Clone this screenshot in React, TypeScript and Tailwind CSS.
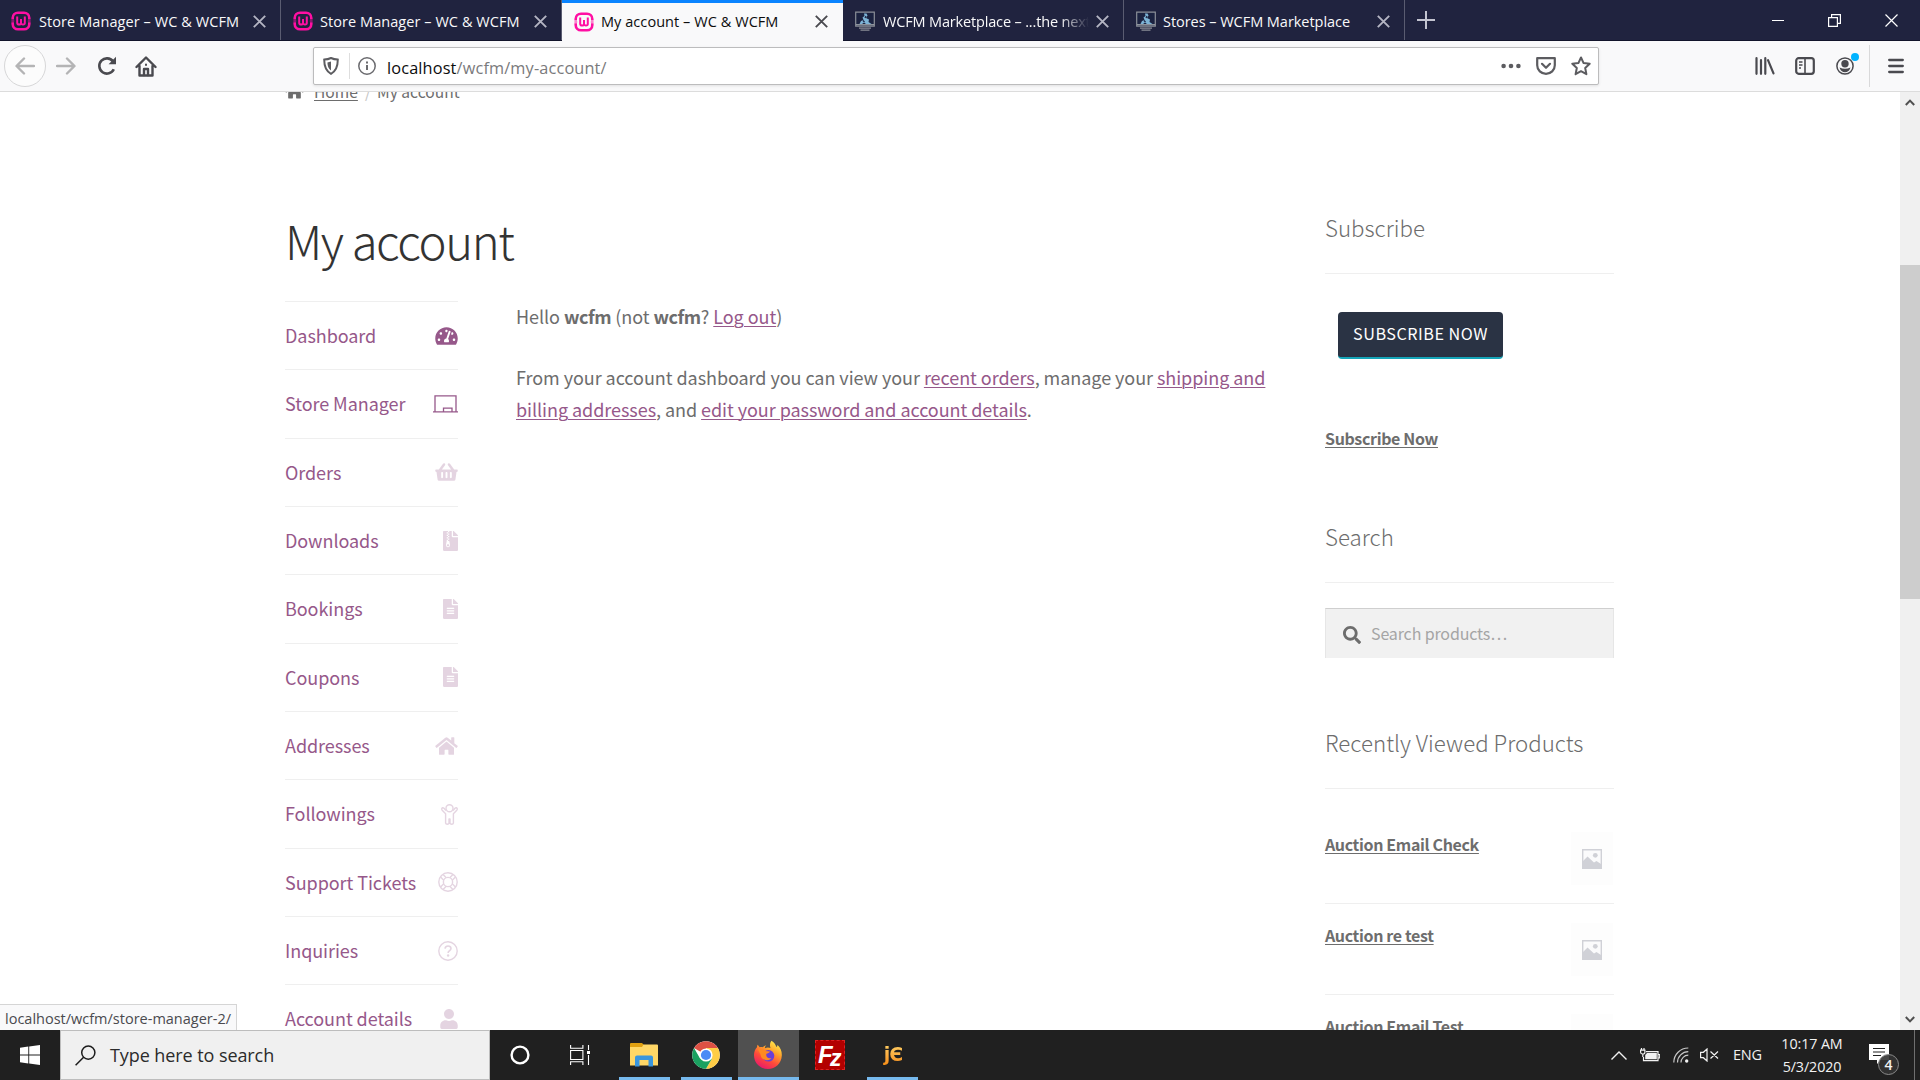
import type { ReactNode } from "react";
import {
  FaFileAlt,
  FaFileArchive,
  FaHome,
  FaSearch,
  FaShoppingBasket,
  FaTachometerAlt,
  FaUser,
} from "react-icons/fa";

/* ------------------------------ browser icons ----------------------------- */

const WooIcon = () => (
  <svg width="20" height="20" viewBox="0 0 20 20" fill="none" stroke="#ff0fa3" className="shrink-0">
    <path d="M1.700 8.600V7a5.300 5.300 0 0 1 5.300-5.300h6a5.300 5.300 0 0 1 5.300 5.300v1.600M1.700 11.200V13a5.300 5.300 0 0 0 5.300 5.300h6a5.300 5.300 0 0 0 5.300-5.300v-1.800" strokeWidth="2.600" />
    <path d="M6.200 5.600v6.200q0 1.800 1.800 1.800t2-1.800V8v3.800q.1 1.800 2 1.800t1.800-1.800V5.600" strokeWidth="2" />
    <path d="M.4 10h2.800M16.800 10h2.800" strokeWidth="1" />
  </svg>
);

const MonitorIcon = () => (
  <svg width="20" height="20" viewBox="0 0 20 20" fill="none" className="shrink-0">
    <path d="M.7 1.200h18.600v14H.7z" fill="#1b2240" stroke="#8b8f98" strokeWidth="1.200" />
    <path d="M9 2.500h2.500l1 2-1.500 2.500 3 1.500-.5 2.500 3 2H11l-2-1.500-2 1.500H4.500l1.500-3 2.500-1-1-2.500 2-1.500z" fill="#7db4d6" />
    <path d="M8 9.500l1.500 1.500M11 5l-1 2" stroke="#1b2240" strokeWidth="1.200" />
    <path d="M1 13.700h18" stroke="#9aa0a8" strokeWidth="1.200" />
    <path d="M4 17.200h12M5.500 19.200h9" stroke="#8b8f98" strokeWidth="1.200" />
  </svg>
);

const CloseIcon = ({ className }: { className: string }) => (
  <svg width="13" height="13" viewBox="0 0 13 13" fill="none" stroke="currentColor" strokeWidth="1.9" className={className}>
    <path d="M.8.8l11.400 11.400M12.200.8L.8 12.200" />
  </svg>
);

/* ---------------------------------- tabs ---------------------------------- */

const TABS = [
  { title: "Store Manager – WC & WCFM", icon: <WooIcon />, box: "w-[281px] pl-[11px]", text: "tracking-[0.080px]" },
  { title: "Store Manager – WC & WCFM", icon: <WooIcon />, box: "w-[281px] pl-[12px]", text: "tracking-[0.060px] -ml-px" },
  { title: "My account – WC & WCFM", icon: <WooIcon />, box: "w-[281px] pl-[12px]", text: "tracking-[0.060px] -ml-px", active: true },
  { title: "WCFM Marketplace – ...the next", icon: <MonitorIcon />, box: "w-[281px] pl-[12px]", text: "tracking-[-0.160px]", fade: true },
  { title: "Stores – WCFM Marketplace", icon: <MonitorIcon />, box: "w-[281px] pl-[12px]", text: "tracking-[-0.040px] -ml-px" },
];

const TabStrip = () => (
  <div className="flex h-[41px] shrink-0 border-b border-[#12142b] bg-[#20233f]">
    {TABS.map((tab, i) => (
      <div
        key={i}
        className={
          tab.active
            ? `relative z-10 flex h-[41px] shrink-0 items-center border-t-[3px] border-[#0a84ff] bg-[#f9f9fa] pb-px pr-[15px] text-[#0c0c0d] ${tab.box}`
            : `flex h-10 shrink-0 items-center border-r border-[#5a5c71] pr-[14px] pt-[2px] text-[#f9f9fa] ${tab.box}`
        }
      >
        {tab.icon}
        <span className="ml-[8px] w-[206px] shrink-0">
          <span
            className={`block overflow-hidden whitespace-nowrap pt-px text-[14.500px] leading-5 ${tab.text} ${
              tab.fade ? "[mask-image:linear-gradient(to_right,black_86%,transparent)]" : ""
            }`}
          >
            {tab.title}
          </span>
        </span>
        <CloseIcon className={tab.active ? "ml-auto text-[#4a4a4f]" : "ml-auto text-[#b4b5c3]"} />
      </div>
    ))}
    <svg width="18" height="18" viewBox="0 0 18 18" stroke="#c3c4d0" strokeWidth="2" className="ml-[12px] mt-[11px]">
      <path d="M9 0v18M0 9h18" />
    </svg>
    <div className="ml-auto flex h-10 items-center gap-[44px] pr-[22px] text-white">
      <svg width="12" height="13" viewBox="0 0 12 13" stroke="currentColor">
        <path d="M0 6.500h12" />
      </svg>
      <svg width="13" height="13" viewBox="0 0 13 13" fill="none" stroke="currentColor" strokeWidth="1.200">
        <path d="M.6 3.600h8.800v8.800H.6zM3.600 3.400V.6h8.800v8.800H9.600" />
      </svg>
      <svg width="13" height="13" viewBox="0 0 13 13" stroke="currentColor" strokeWidth="1.200">
        <path d="M.5.5l12 12M12.500.5l-12 12" />
      </svg>
    </div>
  </div>
);

/* --------------------------------- toolbar -------------------------------- */

const Toolbar = () => (
  <div className="flex h-[51px] shrink-0 items-center border-b border-[#dcdcdc] bg-[#f9f9fa]">
    <span className="ml-[4px] flex size-[42px] shrink-0 items-center justify-center rounded-full border border-[#d7d7d8] bg-[#fcfcfc] text-[#b4b4b5]">
      <svg width="20" height="18" viewBox="0 0 20 18" fill="none" stroke="currentColor" strokeWidth="2.400" strokeLinecap="round" strokeLinejoin="round">
        <path d="M9 1.500L1.500 9 9 16.500M2 9h17" />
      </svg>
    </span>
    <svg width="20" height="18" viewBox="0 0 20 18" fill="none" stroke="#b4b4b5" strokeWidth="2.400" strokeLinecap="round" strokeLinejoin="round" className="ml-[10px]">
      <path d="M11 1.500L18.500 9 11 16.500M18 9H1" />
    </svg>
    <svg width="20" height="20" viewBox="0 0 20 20" fill="none" stroke="#4a4a4f" strokeWidth="2.600" className="ml-[21px]">
      <path d="M16.800 13.200A7.600 7.600 0 1 1 16 5.400" />
      <path d="M19 .8v7.400h-7.400z" fill="#4a4a4f" stroke="none" />
    </svg>
    <svg width="22" height="21" viewBox="0 0 22 21" fill="none" stroke="#4a4a4f" strokeWidth="2.400" strokeLinejoin="round" strokeLinecap="round" className="ml-[18px]">
      <path d="M1.500 11L11 1.500 20.500 11M4.500 10v9.500h13V10" />
      <path d="M9 19v-6h4v6" />
      <path d="M11 8.500v.6" strokeWidth="2" />
    </svg>
    <div className="ml-[156px] flex h-[38px] w-[1286px] items-center rounded-[2px] border border-[#bcbcbd] bg-white shadow-[0_1px_3px_rgba(0,0,0,0.1)]">
      <svg width="16" height="18" viewBox="0 0 16 18" fill="none" stroke="#5c5c60" strokeWidth="2" className="ml-[9px] shrink-0">
        <path d="M1.200 2.600Q5 2.400 8 1q3 1.400 6.800 1.600c0 7-1.300 11.500-6.800 14.200C2.500 14.100 1.200 9.600 1.200 2.600z" />
        <path d="M8 4.600v8.900C5.500 11.800 4.500 9 4.400 5.400Q6.300 5.200 8 4.600z" fill="#5c5c60" stroke="none" />
      </svg>
      <span className="ml-[10px] h-[26px] w-px bg-[#dedede]" />
      <svg width="18" height="18" viewBox="0 0 18 18" fill="none" stroke="#6b6b6f" strokeWidth="1.500" className="ml-[8px] shrink-0">
        <circle cx="9" cy="9" r="8.200" />
        <path d="M9 8v5M9 4.600v2" strokeWidth="2" />
      </svg>
      <span className="ml-[11px] whitespace-nowrap pt-[3px] text-[16.300px] leading-5 tracking-[0.150px] text-[#7a7a7c]">
        <span className="text-[#0c0c0d]">localhost</span>/wcfm/my-account/
      </span>
      <span className="ml-auto flex items-center pr-[7px] text-[#5c5c60]">
        <svg width="20" height="6" viewBox="0 0 20 6" fill="currentColor">
          <circle cx="2.600" cy="3" r="2.300" />
          <circle cx="10" cy="3" r="2.300" />
          <circle cx="17.400" cy="3" r="2.300" />
        </svg>
        <svg width="20" height="18" viewBox="0 0 20 18" fill="none" stroke="currentColor" strokeWidth="2.200" strokeLinejoin="round" strokeLinecap="round" className="ml-[15px]">
          <path d="M1.200 1.200h17.600v7c0 5-4 8.600-8.800 8.600s-8.800-3.600-8.800-8.600z" />
          <path d="M6 6.800l4 4 4-4" />
        </svg>
        <svg width="20" height="20" viewBox="0 0 20 20" fill="none" stroke="currentColor" strokeWidth="2" strokeLinejoin="round" className="ml-[15px]">
          <path d="M10 1.500l2.600 5.600 6.100.7-4.500 4.200 1.200 6.200L10 15.200l-5.400 3 1.200-6.200L1.300 7.800l6.100-.7z" />
        </svg>
      </span>
    </div>
    <div className="ml-auto flex items-center text-[#4a4a4f]">
      <svg width="20" height="18" viewBox="0 0 20 18" fill="none" stroke="currentColor" strokeWidth="2.200" strokeLinecap="round">
        <path d="M1.500 1.200v15.600M6 3.200v13.600M10.300 1.200v15.600M13 3.200l5.500 13.200" />
      </svg>
      <svg width="20" height="18" viewBox="0 0 20 18" fill="none" stroke="currentColor" strokeWidth="2.200" className="ml-[20px]">
        <rect x="1.200" y="1.200" width="17.600" height="15.600" rx="2.500" />
        <path d="M10 1v16" strokeWidth="1.600" />
        <path d="M4 5h3.500M4 8h3.500M4 11h2" strokeWidth="1.300" />
      </svg>
      <span className="relative ml-[21px]">
        <svg width="18" height="18" viewBox="0 0 18 18" fill="currentColor">
          <circle cx="9" cy="9" r="8.100" fill="none" stroke="currentColor" strokeWidth="1.500" />
          <circle cx="9" cy="6.700" r="3.700" />
          <path d="M3.500 10.500q5.500 2.400 11 0-1.500 4.800-5.500 4.800t-5.500-4.800z" />
        </svg>
        <span className="absolute -right-[5px] -top-[4px] size-[8px] rounded-full bg-[#00b3ff]" />
      </span>
      <span className="ml-[15px] h-[42px] w-px bg-[#d9d9da]" />
      <svg width="16" height="16" viewBox="0 0 16 16" stroke="currentColor" strokeWidth="2.300" strokeLinecap="round" className="ml-[18px] mr-[16px]">
        <path d="M1.200 2h13.600M1.200 8h13.600M1.200 14h13.600" />
      </svg>
    </div>
  </div>
);

/* ------------------------------ account page ------------------------------ */

const LaptopIcon = () => (
  <svg width="25" height="18" viewBox="0 0 25 18" fill="none" stroke="currentColor" strokeWidth="1.300">
    <path d="M2 16.500V.9h21v15.600M0 16.900h25M10.500 16.500v-3.300h8.500v3.300" />
  </svg>
);

const ChildIcon = () => (
  <svg width="17" height="21" viewBox="0 0 17 21" fill="none" stroke="currentColor" strokeWidth="1.400" strokeLinejoin="round">
    <circle cx="8.500" cy="4.200" r="3.500" />
    <path d="M5 6.600L3 4.200Q1.600 3.200.8 4.600q-.2.900.4 1.600l3.400 3.600v9.400q.2 1 1.700 1t1.700-1V15h1v4.200q.2 1 1.700 1t1.700-1V9.800l3.400-3.600q.6-.7.4-1.600-.8-1.400-2.200-.4l-2 2.400" />
  </svg>
);

const LifeRingIcon = () => (
  <svg width="20" height="20" viewBox="0 0 20 20" fill="none" stroke="currentColor" strokeWidth="1.400">
    <circle cx="10" cy="10" r="9.200" />
    <circle cx="10" cy="10" r="4.600" />
    <path d="M5.700 8.200L2.600 5.100M8.200 5.700L5.100 2.600M11.800 5.700l3.100-3.100M14.300 8.200l3.100-3.100M14.300 11.800l3.100 3.100M11.800 14.300l3.100 3.100M8.200 14.300l-3.100 3.100M5.700 11.800l-3.100 3.100" />
  </svg>
);

const QuestionIcon = () => (
  <svg width="20" height="20" viewBox="0 0 20 20" fill="none" stroke="currentColor" strokeWidth="1.400">
    <circle cx="10" cy="10" r="9.200" />
    <path d="M7 7.600q.5-2.600 3-2.600 2.900 0 3 2.500 0 1.300-1.500 2.200-1.400.8-1.400 2.300" strokeWidth="1.600" />
    <circle cx="10.100" cy="14.500" r="1.200" fill="currentColor" stroke="none" />
  </svg>
);

type NavItem = { label: string; icon: ReactNode; strong?: boolean };

const NAV: NavItem[] = [
  { label: "Dashboard", icon: <FaTachometerAlt className="h-[20px] w-[23px]" />, strong: true },
  { label: "Store Manager", icon: <LaptopIcon />, strong: true },
  { label: "Orders", icon: <FaShoppingBasket className="h-[20px] w-[23px]" /> },
  { label: "Downloads", icon: <FaFileArchive className="h-[20px] w-[15px]" /> },
  { label: "Bookings", icon: <FaFileAlt className="h-[20px] w-[15px]" /> },
  { label: "Coupons", icon: <FaFileAlt className="h-[20px] w-[15px]" /> },
  { label: "Addresses", icon: <FaHome className="h-[20px] w-[23px]" /> },
  { label: "Followings", icon: <ChildIcon /> },
  { label: "Support Tickets", icon: <LifeRingIcon /> },
  { label: "Inquiries", icon: <QuestionIcon /> },
  { label: "Account details", icon: <FaUser className="h-[20px] w-[18px]" /> },
];

const AccountNav = () => (
  <nav className="w-[173px] shrink-0 border-t border-[#efefef]">
    {NAV.map((item) => (
      <a
        key={item.label}
        className="flex h-[68.350px] items-center justify-between border-b border-[#efefef] text-[18px] leading-8 tracking-[-0.060px] text-[#96588a]"
      >
        <span className="whitespace-nowrap pb-[1.500px]">{item.label}</span>
        <span className={item.strong ? "" : "opacity-25"}>{item.icon}</span>
      </a>
    ))}
  </nav>
);

const Link = ({ children }: { children: ReactNode }) => (
  <a className="text-[#96588a] underline decoration-1 underline-offset-[2px]">{children}</a>
);

const WidgetTitle = ({ children }: { children: ReactNode }) => (
  <h2 className="h-[64px] whitespace-nowrap border-b border-[#efefef] text-[22.300px] font-light leading-[34px] text-[#6d6d6d]">
    {children}
  </h2>
);

const PlaceholderImage = () => (
  <span className="mr-px mt-[2px] flex h-[53px] w-[42px] items-center justify-center bg-[#fdfdfd]">
    <svg width="20" height="20" viewBox="0 0 20 20">
      <path d="M.7.7h18.600v18.600H.7z" fill="#fbfbfc" stroke="#d0d1d7" strokeWidth="1.400" />
      <circle cx="13.300" cy="6.300" r="2.400" fill="#d0d1d7" />
      <path d="M1 12l4.500-4.500 6.500 6 2.500-1.500 4.500 3v4H1z" fill="#d0d1d7" />
    </svg>
  </span>
);

const PRODUCTS = ["Auction Email Check", "Auction re test", "Auction Email Test"];

const Sidebar = () => (
  <aside className="w-[289px] shrink-0 pt-[118px] text-[#6d6d6d]">
    <div className="pb-px">
      <WidgetTitle>Subscribe</WidgetTitle>
    </div>
    <button className="ml-[13px] mt-[37px] block h-[47px] w-[165px] rounded-[4px] border-b-2 border-[#15a5b8] bg-[#2a3344] text-center text-[16.200px] leading-[43px] tracking-[0.5px] text-white">
      <span className="block h-[45px]">SUBSCRIBE NOW</span>
    </button>
    <p className="mt-[63px] h-[33px] text-[16px] font-semibold leading-8 tracking-[-0.350px]">
      <a className="underline decoration-1 underline-offset-[2px]">Subscribe Now</a>
    </p>
    <div className="mt-[64px]">
      <WidgetTitle>Search</WidgetTitle>
    </div>
    <label className="mt-[25px] flex h-[50px] items-center border border-b-0 border-[#e6e6e6] border-t-[#cfcfcf] bg-[#f1f1f1] pl-[17px]">
      <FaSearch className="mt-[2px] size-[18px]" />
      <span className="ml-[10px] pb-[2px] text-[16px] leading-8 tracking-[-0.140px] text-[#a5a5a5]">Search products…</span>
    </label>
    <div className="mt-[67px]">
      <WidgetTitle>Recently Viewed Products</WidgetTitle>
    </div>
    <ul className="pt-[24px]">
      {PRODUCTS.map((name) => (
        <li key={name} className="flex h-[91px] items-start justify-between border-b border-[#efefef] pt-[17px]">
          <a className="-mt-[2px] text-[16px] font-semibold leading-8 tracking-[-0.350px] underline decoration-1 underline-offset-[2px]">
            {name}
          </a>
          <PlaceholderImage />
        </li>
      ))}
    </ul>
  </aside>
);

const Page = () => (
  <div className="flex min-w-0 flex-1 overflow-hidden bg-white pl-[285px] font-['Noto_Sans_CJK_SC',sans-serif]">
    <div className="w-[1040px] shrink-0">
      <div className="-mt-[17px] flex h-8 items-center text-[15.600px] leading-8 text-[#6d6d6d]">
        <FaHome className="h-[18px] w-[19px]" />
        <a className="ml-[10px] underline decoration-1 underline-offset-[2px]">Home</a>
        <span className="ml-[7px] text-[#c5c5c5]">/</span>
        <span className="ml-[6px]">My account</span>
      </div>
      <h1 className="mt-[101px] h-[65px] whitespace-nowrap text-[47.300px] font-light leading-[64px] tracking-[-1.400px] text-[#333333]">
        My account
      </h1>
      <div className="mt-[28px] flex">
        <AccountNav />
        <div className="-mt-px ml-[58px] w-[770px] text-[18px] leading-[32px] tracking-[-0.050px] text-[#6d6d6d]">
          <p>
            Hello <strong className="font-semibold tracking-[-0.400px]">wcfm</strong> (not{" "}
            <strong className="font-semibold tracking-[-0.400px]">wcfm</strong>? <Link>Log out</Link>)
          </p>
          <p className="mt-[29px] whitespace-nowrap">
            From your account dashboard you can view your <Link>recent orders</Link>, manage your{" "}
            <Link>shipping and</Link>
            <br />
            <Link>billing addresses</Link>, and <Link>edit your password and account details</Link>.
          </p>
        </div>
      </div>
    </div>
    <Sidebar />
  </div>
);

const Scrollbar = () => (
  <div className="flex w-5 shrink-0 flex-col items-center bg-[#f0f0f0] pb-[7px] pt-[7px] text-[#505050]">
    <svg width="10" height="7" viewBox="0 0 10 7" fill="none" stroke="currentColor" strokeWidth="2">
      <path d="M.8 6L5 1.600 9.200 6" />
    </svg>
    <span className="mt-[159px] h-[334px] w-full bg-[#cdcdcd]" />
    <svg width="10" height="7" viewBox="0 0 10 7" fill="none" stroke="currentColor" strokeWidth="2" className="mt-auto">
      <path d="M.8 1L5 5.400 9.200 1" />
    </svg>
  </div>
);

/* --------------------------------- taskbar -------------------------------- */

const FolderIcon = () => (
  <svg width="28" height="24" viewBox="0 0 28 24">
    <path d="M0 1q0-1 1-1h11l2 2v6H0z" fill="#e0a010" />
    <path d="M0 4h12l1.500-2.500H27q1 0 1 1v20H0z" fill="#ffd766" />
    <path d="M5 23.500V14.500q0-2 2-2h14q2 0 2 2v9h-4.500v-6.500h-9v6.500z" fill="#3a96dd" />
  </svg>
);

const ChromeIcon = () => (
  <svg width="28" height="28" viewBox="0 0 28 28">
    <circle cx="14" cy="14" r="13.800" fill="#fff" />
    <path d="M14 14L2.050 7.100A13.800 13.800 0 0 1 25.950 7.100H14z" fill="#dd5144" />
    <path d="M25.950 7.100A13.800 13.800 0 0 1 14 27.800l6-10.350L14 7.100z" fill="#ffcd46" />
    <path d="M14 27.800A13.800 13.800 0 0 1 2.050 7.100l6 10.350L20 17.450z" fill="#1ba160" />
    <circle cx="14" cy="14" r="6.600" fill="#fff" />
    <circle cx="14" cy="14" r="5.100" fill="#4c8bf5" />
  </svg>
);

const FirefoxIcon = () => (
  <svg width="30" height="30" viewBox="0 0 30 30">
    <defs>
      <linearGradient id="fx" x1="0.800" y1="0" x2="0.250" y2="1">
        <stop offset="0" stopColor="#fff44f" />
        <stop offset="0.350" stopColor="#ffa02a" />
        <stop offset="0.650" stopColor="#ff4b3a" />
        <stop offset="1" stopColor="#e8156f" />
      </linearGradient>
    </defs>
    <path d="M18.500.8c3.200 2 4 4.200 5 6.200 1-.4.900-1.500.8-2.200 3.500 3 4.700 7 4.500 10.700C28.400 23.500 22.500 29 15 29 7 29 1.200 23 1 15.500.9 11.800 2.200 9 4 7.200c0-1 .2-1.800.7-2.400l2 2.400c1-.3 2-.3 3 0 1-1 2.200-1.700 3.500-2-1 1-1.300 2-1.300 3 2-1 4-.8 5.600-.2C16.600 5.600 16.800 2.800 18.500.8z" fill="url(#fx)" />
    <circle cx="15.500" cy="15.800" r="5.800" fill="#6b3fd6" />
    <path d="M5 9.500c3-1 6 0 7.500 1.500l4.500.5c-.8 1.700-2.300 1.900-3.600 2.200-.9 3.300 1.600 5.200 5 4.300-2.500 4-10.400 2.500-10.900-3.500z" fill="#ff8a20" />
  </svg>
);

const FileZillaIcon = () => (
  <span className="flex size-[30px] items-center justify-center border border-dashed border-[#d22] bg-[#b30000] pr-[3px] font-['Liberation_Sans',sans-serif] text-[24px] font-bold italic leading-none tracking-[-2.500px] text-white">
    F<span className="mt-[7px] text-[23px]">z</span>
  </span>
);

const JeIcon = () => (
  <span className="mb-[3px] bg-gradient-to-b from-[#ffd76a] to-[#f58a07] bg-clip-text pl-px font-['DejaVu_Sans',sans-serif] text-[19px] font-bold leading-6 tracking-[-1px] text-transparent">
    jЄ
  </span>
);

const APPS: { icon: ReactNode; box: string; open?: boolean }[] = [
  { icon: <FolderIcon />, box: "w-[51px] pr-[2px]", open: true },
  { icon: <ChromeIcon />, box: "ml-[11px] w-[51px] pr-[2px]", open: true },
  { icon: <FirefoxIcon />, box: "ml-[6px] w-[61px] bg-[#505050] pr-[2px]", open: true },
  { icon: <FileZillaIcon />, box: "w-[62px]" },
  { icon: <JeIcon />, box: "ml-[6px] w-[51px]", open: true },
];

const Taskbar = () => (
  <div className="flex h-[50px] shrink-0 bg-[#202020] text-[#f2f2f2]">
    <div className="flex w-[60px] items-center justify-center">
      <svg width="20" height="20" viewBox="0 0 20 20" fill="#fff">
        <path d="M0 2.700l8.300-1.100v7.900H0zM9.200 1.400L20 0v9.500H9.200zM0 10.400h8.300v8L0 17.300zM9.200 10.400H20V20L9.200 18.500z" />
      </svg>
    </div>
    <div className="flex w-[430px] items-center border border-[#bdbdbd] bg-[#f0f0f0] pl-[14px] text-[#2b2b2b]">
      <svg width="21" height="21" viewBox="0 0 21 21" fill="none" stroke="#1c1c1c" strokeWidth="1.500">
        <circle cx="13.300" cy="7.600" r="6.600" />
        <path d="M8.600 12.300L.6 20.200" />
      </svg>
      <span className="ml-[14px] text-[18px] leading-6 tracking-[-0.080px]">Type here to search</span>
    </div>
    <div className="flex w-[129px] items-center pl-[20px]">
      <svg width="20" height="20" viewBox="0 0 20 20" fill="none" stroke="#fff" strokeWidth="2.400">
        <circle cx="10" cy="10" r="8.400" />
      </svg>
      <svg width="21" height="20" viewBox="0 0 21 20" fill="none" stroke="#fff" strokeWidth="1.100" className="ml-[40px]">
        <path d="M.6 5.500h12.300v9H.6zM.6 0v3.300h12.300V0M.6 20v-3.300h12.300V20M18.500 0v5M18.500 10v10" />
        <path d="M17 6h3v3h-3z" fill="#fff" stroke="none" />
      </svg>
    </div>
    {APPS.map((app, i) => (
      <div key={i} className={`relative flex items-center justify-center ${app.box}`}>
        {app.icon}
        {app.open ? <span className="absolute inset-x-0 bottom-0 h-[3px] bg-[#76b9ed]" /> : null}
      </div>
    ))}
    <div className="ml-auto flex items-center">
      <svg width="16" height="9" viewBox="0 0 16 9" fill="none" stroke="currentColor" strokeWidth="1.400">
        <path d="M.5 8.500L8 1l7.500 7.500" />
      </svg>
      <svg width="20" height="14" viewBox="0 0 20 14" fill="none" stroke="currentColor" strokeWidth="1.200" className="ml-[13px]">
        <path d="M6 3.600h12v9H3.500V9M18.500 6.500h1.200v3.500h-1.200" />
        <path d="M7 5h9.800v6.200H5.200V7z" fill="currentColor" stroke="none" />
        <path d="M1.500 0v2M4 0v2M.6 2.200h4.300v2q0 1.800-2.100 1.800T.6 4.200zM2.800 6v3" />
      </svg>
      <svg width="16" height="16" viewBox="0 0 16 16" fill="none" stroke="currentColor" strokeWidth="1.200" className="ml-[13px]">
        <path d="M.8 15.500A14.500 14.500 0 0 1 15.300 1M4.500 15.500A10.800 10.800 0 0 1 15.300 4.700M8 15.500a7.300 7.300 0 0 1 7.300-7.300" opacity="0.800" />
        <circle cx="13.700" cy="14" r="1.700" fill="currentColor" stroke="none" />
      </svg>
      <svg width="19" height="14" viewBox="0 0 19 14" fill="none" stroke="currentColor" strokeWidth="1.200" className="ml-[11px]">
        <path d="M.6 4.300h2.800L7 1v12L3.400 9.700H.6zM10.500 3.500l7.500 7M18 3.500l-7.500 7" />
      </svg>
      <span className="ml-[14px] w-[30px] text-[14.500px] leading-5 tracking-[-0.2px]">ENG</span>
      <span className="ml-[17px] flex w-[64px] flex-col items-center whitespace-nowrap text-[14.300px] leading-[23px] tracking-[-0.1px]">
        <span>10:17 AM</span>
        <span>5/3/2020</span>
      </span>
      <span className="relative ml-[25px] mr-[25px]">
        <svg width="20" height="20" viewBox="0 0 20 20" className="-mt-[2px]">
          <path d="M0 0h20v16h-8l-4 4v-4H0z" fill="#fff" />
          <path d="M4 4.500h12M4 8h12M4 11.500h8" stroke="#202020" strokeWidth="1.200" />
        </svg>
        <span className="absolute left-[9px] top-[8px] flex size-[21px] items-center justify-center rounded-full border border-[#8a8a8a] bg-[#333333]/90 text-[14px] font-semibold leading-none">
          4
        </span>
      </span>
      <span className="mr-[5px] h-[50px] w-px bg-[#6f6f6f]" />
    </div>
  </div>
);

export default function App() {
  return (
    <div className="flex h-[1080px] w-[1920px] flex-col overflow-hidden bg-white font-['Open_Sans',sans-serif]">
      <TabStrip />
      <Toolbar />
      <div className="relative flex min-h-0 flex-1">
        <Page />
        <Scrollbar />
        <div className="absolute bottom-0 left-0 flex h-[26px] w-[237px] items-center whitespace-nowrap border-r border-t border-[#d5d5d5] bg-[#f9f9fa] pl-[5px] pt-[2px] text-[14.500px] leading-5 text-[#4a4a4f]">
          localhost/wcfm/store-manager-2/
        </div>
      </div>
      <Taskbar />
    </div>
  );
}
